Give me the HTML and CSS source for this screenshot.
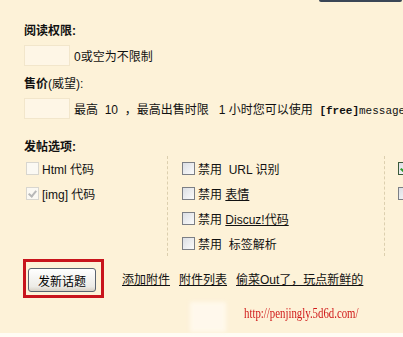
FILE: index.html
```html
<!DOCTYPE html>
<html>
<head>
    <meta charset="UTF-8">
    <title>发新话题</title>
    <link rel="stylesheet" href="styles.css">
</head>
<body>
    <div class="edge"></div>
    <div class="form">
        <div class="label"><b>阅读权限:</b></div>
        <div class="field">
            <input type="text" class="txt">
            <span>0或空为不限制</span>
        </div>

        <div class="label"><b>售价</b>(威望):</div>
        <div class="field">
            <input type="text" class="txt">
            <span>最高&nbsp; 10 &nbsp;，最高出售时限 &nbsp;&nbsp;1 小时您可以使用&nbsp; <b class="mono">[free]</b><span class="mono">message</span></span>
        </div>

        <div class="label label-opts"><b>发帖选项:</b></div>
        <div class="options">
            <div class="col col-1">
                <div class="opt"><span class="cb disabled"></span>Html 代码</div>
                <div class="opt"><span class="cb disabled checked"></span>[img] 代码</div>
            </div>
            <div class="col col-2">
                <div class="opt"><span class="cb"></span>禁用&nbsp; URL 识别</div>
                <div class="opt"><span class="cb"></span>禁用&nbsp; <u>表情</u></div>
                <div class="opt"><span class="cb"></span>禁用&nbsp; <u>Discuz!代码</u></div>
                <div class="opt"><span class="cb"></span>禁用&nbsp; 标签解析</div>
            </div>
            <div class="col col-3">
                <div class="opt"><span class="cb on"></span></div>
                <div class="opt"><span class="cb"></span></div>
            </div>
        </div>

        <div class="actions">
            <div class="mark">
                <button class="submit">发新话题</button>
            </div>
            <a href="#">添加附件</a>
            <a href="#">附件列表</a>
            <a href="#">偷菜Out了，玩点新鲜的</a>
        </div>

        <div class="footer">
            <span class="smear"></span>
            <span class="wm">http://penjingly.5d6d.com/</span>
        </div>
    </div>
    <div class="bottom"></div>
</body>
</html>
```
FILE: styles.css
```css
body {
    margin: 0;
    background: #fdf2d8;
    font-family: "Liberation Sans", "Noto Sans CJK SC", sans-serif;
    font-size: 12px;
    color: #111;
    overflow: hidden;
}
.edge {
    margin-left: 319px;
    width: 83px;
    height: 2px;
    background: #3a4656;
    border-radius: 0 0 3px 3px;
}
.form {
    padding-left: 24px;
}
.label {
    display: flex;
    align-items: center;
    height: 16px;
    margin-top: 8px;
    white-space: pre;
}
.form > .label:first-child {
    margin-top: 19px;
}
.label-opts {
    margin-top: 18px !important;
}
.field {
    display: flex;
    align-items: center;
    margin-top: 8px;
    height: 21px;
    white-space: nowrap;
}
.txt {
    box-sizing: border-box;
    width: 46px;
    height: 21px;
    margin: 0 4px 0 0;
    border: 1px solid #f2e6cb;
    background: #fef6e6;
}
.mono {
    font-family: "Liberation Mono", monospace;
    font-size: 11px;
}
.options {
    display: flex;
    margin-top: 3px;
    height: 100px;
}
.col {
    display: flex;
    flex-direction: column;
    flex-shrink: 0;
}
.col-1 {
    width: 141px;
    padding-left: 2px;
    border-right: 1px dashed #dccfae;
}
.col-2 {
    width: 202px;
    padding-left: 14px;
    border-right: 1px dashed #dccfae;
}
.col-3 {
    padding-left: 13px;
}
.opt {
    display: flex;
    align-items: center;
    height: 25px;
    white-space: nowrap;
}
.cb {
    box-sizing: border-box;
    width: 13px;
    height: 13px;
    margin-right: 3px;
    border: 1px solid #7c7f85;
    background: linear-gradient(135deg, #dcdfe4, #fbfbfb);
    position: relative;
}
.cb.disabled {
    border-color: #d8d6cf;
    background: #fbf9f3;
}
.cb.checked::after, .cb.on::after {
    content: "";
    position: absolute;
    left: 3px;
    top: 1px;
    width: 3px;
    height: 6px;
    border: solid #b8b8b8;
    border-width: 0 2px 2px 0;
    transform: rotate(40deg);
}
.cb.on {
    border-color: #3a5a3a;
}
.cb.on::after {
    border-color: #2c9b2c;
}
.actions {
    display: flex;
    align-items: center;
    margin-top: 3px;
    margin-left: -1px;
}
.mark {
    box-sizing: border-box;
    width: 81px;
    height: 39px;
    border: 3px solid #c8141c;
    padding: 6px 0 0 2px;
    margin-right: 18px;
}
.submit {
    box-sizing: border-box;
    width: 68px;
    height: 24px;
    padding: 0;
    border: 1px solid #5a6470;
    border-radius: 3px;
    background: linear-gradient(#ffffff, #ecebe6 80%, #d6d0c5);
    font-family: "Noto Sans CJK SC", sans-serif;
    font-size: 12px;
    color: #000;
}
.actions a {
    color: #111;
    text-decoration: underline;
    margin-right: 9px;
    white-space: nowrap;
}
.footer {
    display: flex;
    align-items: flex-start;
    height: 35px;
    margin-top: 0;
    padding-left: 166px;
}
.smear {
    width: 48px;
    height: 30px;
    margin-top: 4px;
    background: #fff8ec;
    filter: blur(2px);
    margin-right: 12px;
}
.wm {
    display: inline-block;
    margin-top: 7px;
    margin-left: 6px;
    font-family: "Liberation Serif", serif;
    font-size: 15px;
    line-height: 17px;
    color: #d01818;
    transform: scaleX(0.72);
    transform-origin: left center;
}
.bottom {
    height: 10px;
    background: #fffcf4;
}
```
